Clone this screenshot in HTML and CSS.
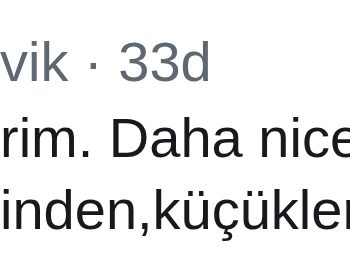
FILE: index.html
```html
<!DOCTYPE html>
<html>
<head>
<meta charset="utf-8">
<link rel="stylesheet" href="styles.css">
</head>
<body>
<div class="tweet">
  <div class="meta"><span class="handle">vik</span> <span class="dot">·</span> <span class="time">33d</span></div>
  <div class="text">
    <div class="line">rim. Daha nice</div>
    <div class="line">inden,küçüklerin</div>
  </div>
</div>
</body>
</html>
```
FILE: styles.css
```css
html, body {
  margin: 0;
  padding: 0;
  background: #ffffff;
}
.tweet {
  width: 350px;
  height: 262px;
  overflow: hidden;
  font-family: "Liberation Sans", Arial, sans-serif;
  font-size: 56px;
  line-height: 72px;
}
.meta {
  padding-top: 26px;
  color: #5f6872;
  white-space: nowrap;
}
.text {
  margin-top: 4px;
  color: #17191c;
}
.line {
  white-space: nowrap;
}
```
